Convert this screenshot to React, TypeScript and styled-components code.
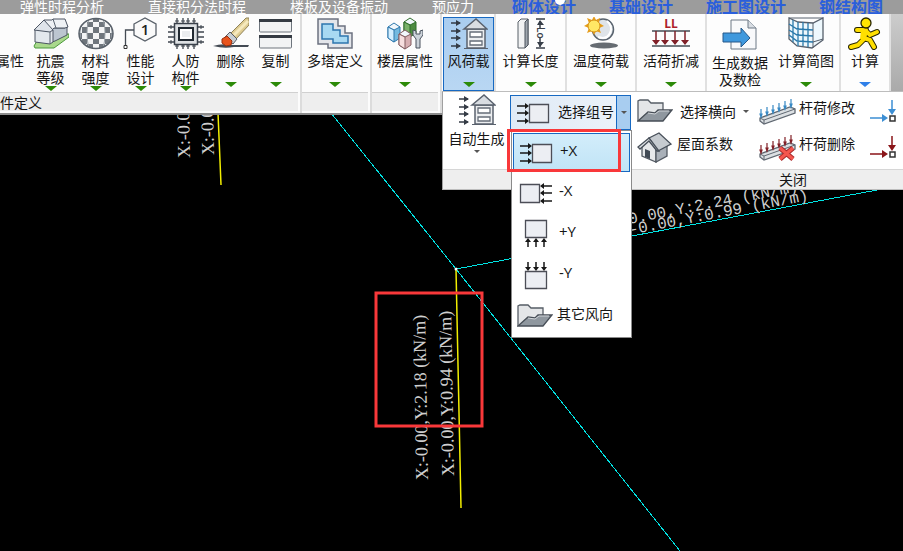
import React from "react";
import styled, { createGlobalStyle } from "styled-components";

const GlobalStyle = createGlobalStyle`
  * { box-sizing: border-box; }
  body { margin: 0; background: #000; overflow: hidden; }
  body, button { font-family: "Noto Sans CJK SC", "Open Sans", sans-serif; font-size: 14px; color: #161616; }
  button { border: 0; padding: 0; background: none; cursor: pointer; white-space: nowrap; }
  svg { display: block; flex: none; }
`;

const Page = styled.main`
  position: relative;
  min-height: 100vh;
  background: #000;
  overflow: hidden;
`;

const Canvas = styled.svg`
  position: absolute;
  inset: 0;
  width: 100%;
  height: 100%;
`;

const Header = styled.header`
  position: relative;
`;

const TabBar = styled.nav`
  display: flex;
  height: 14px;
  padding-left: 20px;
  overflow: hidden;
  background: #9c9c9c;
`;

const Tab = styled.button<{ $strong?: boolean }>`
  flex: none;
  height: 12px;
  line-height: 12px;
  font-size: ${(p) => (p.$strong ? 16 : 14)}px;
  font-weight: ${(p) => (p.$strong ? 700 : 400)};
  color: ${(p) => (p.$strong ? "#2a5fdc" : "#fff")};
  margin-right: ${(p) => (p.$strong ? 33 : 44)}px;
  &:nth-child(4) { margin-right: 38px; }
`;

const Handle = styled.span`
  position: absolute;
  top: -5px;
  left: 555px;
  width: 10px;
  height: 10px;
  border-radius: 50%;
  background: #fff;
`;

const Ribbon = styled.div`
  display: flex;
  align-items: flex-start;
`;

const LeftRibbon = styled.div`
  display: flex;
  flex: none;
  width: 443px;
  background: #fcfcfc;
  border-bottom: 2px solid #8c8c8c;
`;

const Group = styled.section<{ $width: number }>`
  width: ${(p) => p.$width}px;
  flex: none;
  border-right: 2px solid #dcdcdc;
  padding: 0 2px 2px 0;
`;

const GroupTools = styled.div`
  display: flex;
  justify-content: center;
  height: 78px;
  overflow: hidden;
`;

const GroupTitle = styled.div`
  height: 19px;
  line-height: 18px;
  background: #eee;
  border-top: 1px solid #d0d0d0;
`;

const Tool = styled.button<{ $width: number; $active?: boolean; $low?: boolean }>`
  display: flex;
  flex-direction: column;
  align-items: center;
  flex: none;
  width: ${(p) => p.$width}px;
  height: ${(p) => (p.$active ? 74 : 77)}px;
  margin-top: ${(p) => (p.$active ? 3 : 0)}px;
  padding-top: ${(p) => (p.$active ? 0 : p.$low ? 5 : 3)}px;
  line-height: 17px;
  ${(p) => p.$active && "background: linear-gradient(#a9cdf0, #b9d7f3); box-shadow: inset 0 0 0 1px #1769c2;"}
`;

const ToolText = styled.span<{ $double?: boolean }>`
  display: block;
  height: ${(p) => (p.$double ? 36 : 32)}px;
  padding-top: 2px;
  span { display: block; }
`;

const EdgeTool = styled(Tool)`
  align-items: flex-end;
  padding-top: 36px;
  padding-right: 4px;
`;

const RightRibbon = styled.div`
  position: relative;
  display: flex;
  flex: 1;
  min-width: 0;
  height: 77px;
  background: linear-gradient(#ccc, #aaa);
`;

const Cell = styled.div`
  display: flex;
  flex: none;
  height: 77px;
  background: #fdfdfd;
  border-right: 2px solid #e0e0e0;
`;

const Flyout = styled.section`
  position: absolute;
  top: 77px;
  left: -1px;
  right: 0;
  background: #fff;
  border: 1px solid #bdbdbd;
  border-left-color: #a0a0a0;
  border-right: 0;
`;

const FlyoutTools = styled.div`
  display: flex;
  height: 77px;
  padding-left: 5px;
  overflow: hidden;
`;

const FlyoutTitle = styled.div`
  height: 20px;
  padding-left: 336px;
  line-height: 19px;
  background: #eee;
  border-top: 1px solid #d6d6d6;
`;

const AutoTool = styled.button`
  display: flex;
  flex-direction: column;
  align-items: center;
  flex: none;
  width: 57px;
  height: 62px;
  padding-top: 1px;
  line-height: 24px;
`;

const PickColumn = styled.div`
  width: 121px;
  flex: none;
  margin: 3px 6px 0 5px;
`;

const SplitButton = styled.div`
  display: flex;
  height: 35px;
  border: 1px solid #1769c2;
  background: linear-gradient(90deg, #dfeaf6, #edf3fa);
`;

const SplitMain = styled.button`
  display: flex;
  align-items: center;
  gap: 8px;
  flex: 1;
  padding-left: 5px;
  span { padding-bottom: 4px; }
`;

const SplitArrow = styled.button`
  display: flex;
  align-items: center;
  justify-content: center;
  width: 14px;
  border-left: 1px solid #1769c2;
  background: #a8cdf0;
`;

const Menu = styled.div`
  position: absolute;
  z-index: 2;
  top: 38px;
  left: 68px;
  width: 121px;
  padding: 2px 1px 1px;
  background: #fff;
  border: 1px solid #8a8a8a;
`;

const MenuItem = styled.button<{ $active?: boolean }>`
  display: flex;
  align-items: center;
  gap: ${(p) => (p.$active ? 7 : 6)}px;
  width: 100%;
  height: 41px;
  padding: 0 0 0 5px;
  border: 1px solid transparent;
  font-size: 15px;
  font-family: "Open Sans", "Noto Sans CJK SC", sans-serif;
  span { padding-bottom: 6px; }
  &:last-child { padding-left: 3px; gap: 4px; font-size: 14px; }
  ${(p) => p.$active && "height: 39px; border-color: #1769c2; background: linear-gradient(#d3edfb, #c0e4f6);"}
`;

const Marker = styled.div`
  position: absolute;
  z-index: 3;
  top: 37px;
  left: 64px;
  width: 114px;
  height: 43px;
  border: 3px solid #f9383a;
`;

const SmallColumn = styled.div<{ $width: number }>`
  flex: none;
  width: ${(p) => p.$width}px;
`;

const SmallTool = styled.button<{ $gap: number; $tall?: boolean }>`
  display: flex;
  align-items: center;
  gap: ${(p) => p.$gap}px;
  height: ${(p) => (p.$tall ? 38 : 34)}px;
  line-height: 20px;
  & > span { padding-bottom: 8px; }
`;

const LevelTool = styled(SmallTool)`
  & > span { padding-bottom: 0; }
`;

const Art = ({ w = 36, h = 33, children }: { w?: number; h?: number; children: React.ReactNode }) => (
  <svg width={w} height={h} viewBox={`0 0 ${w} ${h}`} fill="none" aria-hidden="true">{children}</svg>
);

const Arrow = ({ color = "#2c8a08" }: { color?: string }) => (
  <Art w={12} h={5}><path d="M0 0h12L6 5z" fill={color} /></Art>
);
const Caret = () => <Art w={6} h={3}><path d="M0 0h6L3 3z" fill="#555" /></Art>;

const HouseBlock = () => (
  <Art>
    <path d="M1 29l3-5 13 1 15-8 4 0v3L21 31H2z" fill="#a9d88c" stroke="#4b9a3c" />
    <path d="M19 11h13l2-3v10l-12 6-3 1z" fill="#bcc6d0" stroke="#4c5563" />
    <path d="M2 13v12l15 2 3-2V13L11 3z" fill="#e3e8ed" stroke="#4c5563" />
    <path d="M11 3h8l1-1h12l3 8-3 1H21l-3 3z" fill="#eef1f4" stroke="#4c5563" />
    <path d="M1 13L11 3l9 10-3 2z" fill="#dfe4ea" stroke="#4c5563" />
    <path d="M20 2l3 9M17 15v12" stroke="#59636f" />
  </Art>
);

const checkerPath = (() => {
  const xs = [1, 4, 9, 15, 21, 27, 32, 35];
  const ys = [1, 5, 10, 16, 22, 27, 31];
  let d = "";
  for (let r = 0; r < 6; r++)
    for (let c = 0; c < 7; c++)
      if ((r + c) % 2) d += `M${xs[c]} ${ys[r]}H${xs[c + 1]}V${ys[r + 1]}H${xs[c]}z`;
  return d;
})();

const Ball = () => (
  <Art>
    <clipPath id="ball"><ellipse cx="18" cy="16.500" rx="17" ry="15" /></clipPath>
    <ellipse cx="18" cy="16.500" rx="17" ry="15" fill="#f3f4f5" />
    <g clipPath="url(#ball)">
      <path d={checkerPath} fill="#6e757c" />
      <path d="M5 1Q-1 16 5 32M11 1Q7 16 11 32M25 1Q29 16 25 32M31 1Q37 16 31 32" stroke="#9da4aa" />
    </g>
    <ellipse cx="18" cy="16.500" rx="17" ry="15" stroke="#59616a" strokeWidth="1.500" />
  </Art>
);

const HexNode = () => (
  <Art>
    <path d="M11 7l11-6 11 6v11l-11 6-11-6z" fill="#fafafa" stroke="#59616a" strokeWidth="1.300" />
    <text x="22" y="18" textAnchor="middle" fontFamily="Open Sans, sans-serif" fontSize="15" fontWeight="600" fill="#222">1</text>
    <path d="M11 13H2.500v16" stroke="#444b54" strokeWidth="1.300" />
    <path d="M1 28.500h3v3H1z" fill="#fff" stroke="#333" />
  </Art>
);

const Chip = () => (
  <Art>
    <path d="M9 1v5M15 1v5M20 1v5M26 1v5M9 28v4M15 28v4M20 28v4M26 28v4M0 10h6M0 15h6M0 20h6M0 25h6M30 10h6M30 15h6M30 20h6M30 25h6" stroke="#3f464f" strokeWidth="1.300" />
    <path d="M7 4h4M13 4h4M18 4h4M24 4h4M7 29h4M13 29h4M18 29h4M24 29h4M3 8v4M3 23v4M33 8v4M33 23v4" stroke="#3f464f" />
    <path d="M6.500 6.500h23v21h-23z" fill="#dde0e3" stroke="#39404a" strokeWidth="1.500" />
    <path d="M11 11h14v12H11z" fill="#fff" stroke="#222a32" strokeWidth="2" />
    <path d="M14 14h8v6h-8z" fill="#ebedef" />
  </Art>
);

const Brush = () => (
  <Art>
    <path d="M0 29q9-3 18-1h18l-1 2H21q-10 2-21-1z" fill="#444b54" />
    <path d="M17 17L33 1h3v7L23 22z" fill="#dfcc92" stroke="#8f8359" />
    <path d="M21 18L35 4" stroke="#f5e9bd" strokeWidth="3" />
    <path d="M12 20l5-5 7 7-4 5z" fill="#c7cdd2" stroke="#565d66" />
    <path d="M9 22l5-3 5 5-1 4-5 1-4-3z" fill="#e8541d" stroke="#9a2f0d" />
  </Art>
);

const Copies = () => (
  <Art>
    {[2, 18].map((y) => (
      <g key={y}>
        <rect x="1.500" y={y + 1} width="32" height="12" rx="1" fill="#f2f3f4" stroke="#6e757d" />
        <path d={`M1 ${y}h33v3H1z`} fill="#353b43" />
      </g>
    ))}
  </Art>
);

const Tower = () => (
  <Art>
    <path d="M1 2h20v7h7v7h7v15H11v-4H1z" fill="#e3e5ea" stroke="#6c7180" strokeWidth="1.500" />
    <path d="M5 7h11v6h7v6h8v7H16v-4H5z" fill="#a8d9f2" stroke="#2e76ae" strokeWidth="1.500" />
  </Art>
);

const Cube = ({ x, y, a, b, s }: { x: number; y: number; a: string; b: string; s: string }) => (
  <g transform={`translate(${x} ${y})`} stroke={s}>
    <path d="M0 4v11l6 4 6-4V4z" fill={b} />
    <path d="M0 4l6-4 6 4-6 3z" fill="#f1f7fb" />
    <path d="M0 4l6 3v12l-6-4z" fill={a} />
  </g>
);

const Floors = () => (
  <Art>
    <Cube x={17} y={1} a="#79b168" b="#4d8c40" s="#2f6d2a" />
    <Cube x={1} y={6} a="#d4efff" b="#74badf" s="#2e78ad" />
    <Cube x={12} y={13} a="#f6dede" b="#d7aeb1" s="#825c60" />
    <path d="M26 13v5l3 4v9h4v-9l3-4v-5l-3 1v3h-4v-3z" fill="#ccd3da" stroke="#48515d" />
  </Art>
);

const WindHouse = () => (
  <Art w={38} h={33}>
    <path d="M1 6h9M1 14h9M1 21h9M1 29h9" stroke="#343b45" strokeWidth="1.500" />
    <path d="M6 3l5 3-5 3zM6 11l5 3-5 3zM6 18l5 3-5 3zM6 26l5 3-5 3z" fill="#343b45" />
    <path d="M17 12h18v19H17z" fill="#eceef0" stroke="#59616d" strokeWidth="1.500" />
    <path d="M14 12L26 2l11 10z" fill="#d9dde2" stroke="#59616d" strokeWidth="1.500" />
    <path d="M20 15h12v5H20zM20 24h12v4H20z" fill="#fff" stroke="#656d78" strokeWidth="1.300" />
    <path d="M14 31.500h24" stroke="#59616d" />
  </Art>
);

const LengthArt = () => (
  <Art>
    <path d="M5 5l3-3h7v26l-3 3H5z" fill="#f1f2f3" stroke="#596069" />
    <path d="M12 5v26l3-3V2z" fill="#9fa6ae" stroke="#4b535d" />
    <path d="M23 2h9M23 31h9M27 4v7M27 21v9" stroke="#373e48" strokeWidth="1.500" />
    <path d="M24 8l3-5 4 5zM24 25l3 5 4-5z" fill="#373e48" />
    <text transform="translate(24 10) rotate(90)" fontFamily="Open Sans, sans-serif" fontSize="10" fontWeight="600" fill="#373e48">Lo</text>
  </Art>
);

const SunMoon = () => (
  <Art w={38}>
    <ellipse cx="22" cy="28.500" rx="14" ry="3" fill="#666c72" />
    <circle cx="21" cy="12.500" r="10.500" fill="#dfe4e9" stroke="#59636e" strokeWidth="1.500" />
    <path d="M25 4q6 5 3 12t-12 4" stroke="#fff" strokeWidth="2" />
    <path d="M12-1l2 4 4-2-1 5 5 3-5 2 2 5-5-2-2 4-2-4-5 2 2-5-5-2 5-3-2-5 5 2z" fill="#e79d1b" />
    <circle cx="12" cy="9" r="6" fill="#ffe765" stroke="#d69319" />
  </Art>
);

const LiveLoad = () => (
  <Art w={40}>
    <text x="20" y="11" textAnchor="middle" fontFamily="Open Sans, sans-serif" fontSize="12" fontWeight="700" fill="#ae1e29">LL</text>
    <path d="M1 14h38M1 29h38" stroke="#464d56" strokeWidth="1.500" />
    <path d="M5 14v12M14 14v12M24 14v12M34 14v12" stroke="#802028" strokeWidth="1.500" />
    <path d="M1 23h8l-4 5zM10 23h8l-4 5zM20 23h8l-4 5zM30 23h8l-4 5z" fill="#802028" />
  </Art>
);

const Export = () => (
  <Art>
    <path d="M9 1h17l8 8v21H9z" fill="#f8f9fb" stroke="#6c7885" />
    <path d="M26 1v8h8" fill="#d8dde3" stroke="#6c7885" />
    <path d="M1 14h18V9l9 10-9 9v-5H1z" fill="#3f98dd" stroke="#26588a" />
  </Art>
);

const Mesh = () => (
  <Art w={38}>
    <path d="M2 1l9 4 15 1 10-5v22L25 31l-15-2-8-7z" fill="#eef8fd" stroke="#57606c" strokeWidth="1.300" />
    <path d="M2 1h34M26 6v25M26 25l10-3" stroke="#57606c" />
    <path d="M2 7l8 5 16 1M2 13l8 5 16 1M2 18l8 6 16 1M6 3v22M11 5v24M16 5v24M21 6v24" stroke="#2878aa" strokeWidth="1.300" />
  </Art>
);

const Runner = () => (
  <Art>
    <g strokeLinejoin="round">
      <path d="M10 13l9 0-2 9-6 6-7 2M17 21l6 2 4 7M18 13l5 5 7-3" stroke="#292600" strokeWidth="6" strokeLinecap="round" />
      <path d="M10 13l9 0-2 9-6 6-7 2M17 21l6 2 4 7M18 13l5 5 7-3" stroke="#ffdf00" strokeWidth="4" strokeLinecap="round" />
    </g>
    <path d="M14 13h7l-3 9h-5z" fill="#ffdf00" />
    <circle cx="19" cy="6" r="5" fill="#ffe400" stroke="#292600" strokeWidth="1.300" />
  </Art>
);

const LoadBox = ({ dir }: { dir: "right" | "left" | "up" | "down" }) => {
  const side = dir === "right" || dir === "left";
  return (
    <Art w={34} h={30}>
      {side ? (
        <g transform={dir === "left" ? "translate(34 0) scale(-1 1)" : undefined}>
          <path d="M1 8h10M1 15h10M1 23h10" stroke="#171717" strokeWidth="1.500" />
          <path d="M9 5l4 3-4 3zM9 12l4 3-4 3zM9 20l4 3-4 3z" fill="#171717" />
          <path d="M13.500 6.500h19v18h-19z" fill="#eceef3" stroke="#4c4e57" strokeWidth="1.300" />
        </g>
      ) : (
        <g transform={dir === "down" ? "translate(0 30) scale(1 -1)" : undefined}>
          <path d="M6.500 1.500h21v17h-21z" fill="#eceef3" stroke="#4c4e57" strokeWidth="1.300" />
          <path d="M9 21v7M17 21v7M25 21v7" stroke="#171717" strokeWidth="1.500" />
          <path d="M6 23l3-4 3 4zM14 23l3-4 3 4zM22 23l3-4 3 4z" fill="#171717" />
        </g>
      )}
    </Art>
  );
};

const Folder = () => (
  <Art w={36} h={24}>
    <path d="M1 22V2l2-1h8l3 3h12v9" fill="#e4e6e8" stroke="#565d66" strokeWidth="1.300" />
    <path d="M1 22l10-9 7 1 3-3h14l-9 11z" fill="#8f979f" stroke="#474e57" strokeWidth="1.300" />
    <path d="M11 14l7 1 4-3h10" stroke="#d0d4d8" />
  </Art>
);

const Home = () => (
  <Art w={36} h={31}>
    <path d="M5 13v11l14 6V17L12 8z" fill="#e6e8ea" stroke="#535a63" strokeWidth="1.300" />
    <path d="M19 18v12l11-6V12z" fill="#a9b0b8" stroke="#535a63" strokeWidth="1.300" />
    <path d="M12 6l10-5 12 11-13 7z" fill="#c6cbd0" stroke="#474f59" strokeWidth="1.300" />
    <path d="M12 6L1 15l2 2 9-8 8 10 2 0z" fill="#dfe2e5" stroke="#474f59" strokeWidth="1.300" />
    <path d="M8 17l5 2v8l-5-2z" fill="#414a55" />
  </Art>
);

const BeamLoad = ({ red }: { red?: boolean }) => {
  const c = red ? "#822027" : "#3889c4";
  return (
    <Art w={38} h={27}>
      <path d="M2 20L32 9l5 2v4L6 26l-4-3z" fill="#dce0e3" stroke="#606872" strokeWidth="1.300" />
      <path d="M2 20l4 2 31-11M6 22v4" stroke="#606872" />
      {[3, 9, 15, 21, 27, 33].map((x, i) => (
        <path key={x} d={`M${x} ${11 - i * 2}v7M${x - 1} ${16 - i * 2}l1 3 1-3z`} stroke={c} strokeWidth="1.200" fill={c} />
      ))}
      {red && (
        <>
          <path d="M22 14L35 25M35 14L22 25" stroke="#a82a2c" strokeWidth="5" />
          <path d="M22 14L35 25M35 14L22 25" stroke="#f4564e" strokeWidth="3" />
        </>
      )}
    </Art>
  );
};

const NodeLoad = ({ color }: { color: string }) => (
  <Art w={28} h={23}>
    <path d="M0 18h16M22 0v12" stroke={color} strokeWidth="1.500" />
    <path d="M12 14l6 4-6 4zM18 9h8l-4 6z" fill={color} />
    <path d="M20 16h5v5h-5z" fill="#fff" stroke="#333" strokeWidth="1.500" />
  </Art>
);

type ToolProps = {
  icon: React.ReactNode; lines: string[]; width: number; active?: boolean; low?: boolean; arrow?: string | null;
};
const RibbonTool = ({ icon, lines, width, active, low, arrow }: ToolProps) => (
  <Tool $width={width} $active={active} $low={low}>
    {icon}
    <ToolText $double={lines.length > 1}>{lines.map((l) => <span key={l}>{l}</span>)}</ToolText>
    {arrow !== null && <Arrow color={arrow} />}
  </Tool>
);

const tabs: [string, boolean][] = [
  ["弹性时程分析", false], ["直接积分法时程", false], ["楼板及设备振动", false], ["预应力", false],
  ["砌体设计", true], ["基础设计", true], ["施工图设计", true], ["钢结构图", true],
];

const winds: [React.ReactNode, string][] = [
  [<LoadBox dir="right" />, "+X"], [<LoadBox dir="left" />, "-X"], [<LoadBox dir="up" />, "+Y"],
  [<LoadBox dir="down" />, "-Y"], [<Folder />, "其它风向"],
];

const Drawing = () => (
  <Canvas role="img" aria-label="荷载简图">
    <g fill="none" strokeWidth="1">
      <path d="M331 113L456 269L680 551M456 269L877 190" stroke="#00e4e4" shapeRendering="crispEdges" />
      <path d="M456 269L461 508M218 113L221 185" stroke="#f2ee00" strokeWidth="1.500" />
    </g>
    <circle cx="456" cy="269" r="1.500" fill="#fff" />
    <g fill="#cfcfcf" fontFamily="Liberation Serif, serif" fontSize="18">
      <text transform="translate(428 480) rotate(-91)">X:-0.00,Y:2.18 (kN/m)</text>
      <text transform="translate(454 476) rotate(-91)">X:-0.00,Y:0.94 (kN/m)</text>
      <text transform="translate(190 158) rotate(-91)">X:-0.00</text>
      <text transform="translate(214 155) rotate(-91)">X:-0.00</text>
    </g>
    <g fill="#cfcfcf" fontFamily="Liberation Mono, monospace" fontSize="16" textAnchor="end">
      <text transform="translate(799 191) rotate(-11)">X:-0.00,Y:2.24 (kN/m)</text>
      <text transform="translate(809 200) rotate(-11)">X:-0.00,Y:0.99 (kN/m)</text>
    </g>
    <rect x="376" y="293" width="106" height="133" fill="none" stroke="#f9383a" strokeWidth="3" />
  </Canvas>
);

export default function App() {
  return (
    <Page>
      <GlobalStyle />
      <Drawing />
      <Header>
        <TabBar>
          {tabs.map(([name, strong]) => <Tab key={name} $strong={strong}>{name}</Tab>)}
          <Handle />
        </TabBar>
        <Ribbon>
          <LeftRibbon>
            <Group $width={302}>
              <GroupTools>
                <EdgeTool $width={28}><ToolText>属性</ToolText></EdgeTool>
                <RibbonTool icon={<HouseBlock />} lines={["抗震", "等级"]} width={45} />
                <RibbonTool icon={<Ball />} lines={["材料", "强度"]} width={45} />
                <RibbonTool icon={<HexNode />} lines={["性能", "设计"]} width={45} />
                <RibbonTool icon={<Chip />} lines={["人防", "构件"]} width={45} />
                <RibbonTool icon={<Brush />} lines={["删除"]} width={45} />
                <RibbonTool icon={<Copies />} lines={["复制"]} width={45} />
              </GroupTools>
              <GroupTitle>件定义</GroupTitle>
            </Group>
            <Group $width={70}>
              <GroupTools><RibbonTool icon={<Tower />} lines={["多塔定义"]} width={66} /></GroupTools>
              <GroupTitle />
            </Group>
            <Group $width={70}>
              <GroupTools><RibbonTool icon={<Floors />} lines={["楼层属性"]} width={66} /></GroupTools>
              <GroupTitle />
            </Group>
          </LeftRibbon>
          <RightRibbon>
            <Cell><RibbonTool icon={<WindHouse />} lines={["风荷载"]} width={51} active /></Cell>
            <Cell><RibbonTool icon={<LengthArt />} lines={["计算长度"]} width={69} /></Cell>
            <Cell><RibbonTool icon={<SunMoon />} lines={["温度荷载"]} width={68} /></Cell>
            <Cell><RibbonTool icon={<LiveLoad />} lines={["活荷折减"]} width={68} /></Cell>
            <Cell>
              <RibbonTool icon={<Export />} lines={["生成数据", "及数检"]} width={66} low arrow={null} />
              <RibbonTool icon={<Mesh />} lines={["计算简图"]} width={66} />
            </Cell>
            <Cell><RibbonTool icon={<Runner />} lines={["计算"]} width={48} arrow="#2f7fe8" /></Cell>
            <Flyout>
              <FlyoutTools>
                <AutoTool><WindHouse /><span>自动生成</span><Caret /></AutoTool>
                <PickColumn>
                  <SplitButton>
                    <SplitMain><LoadBox dir="right" /><span>选择组号</span></SplitMain>
                    <SplitArrow aria-label="展开"><Caret /></SplitArrow>
                  </SplitButton>
                </PickColumn>
                <SmallColumn $width={121}>
                  <LevelTool $gap={7} $tall><Folder /><span>选择横向</span><Caret /></LevelTool>
                  <SmallTool $gap={4}><Home /><span>屋面系数</span></SmallTool>
                </SmallColumn>
                <SmallColumn $width={112}>
                  <SmallTool $gap={3} $tall><BeamLoad /><span>杆荷修改</span></SmallTool>
                  <SmallTool $gap={3}><BeamLoad red /><span>杆荷删除</span></SmallTool>
                </SmallColumn>
                <SmallColumn $width={30}>
                  <SmallTool $gap={0} $tall aria-label="节点荷载修改"><NodeLoad color="#3d8fd4" /></SmallTool>
                  <SmallTool $gap={0} aria-label="节点荷载删除"><NodeLoad color="#8a1519" /></SmallTool>
                </SmallColumn>
              </FlyoutTools>
              <FlyoutTitle>关闭</FlyoutTitle>
              <Menu role="menu">
                {winds.map(([icon, name], i) => (
                  <MenuItem key={name} role="menuitem" $active={i === 0}>{icon}<span>{name}</span></MenuItem>
                ))}
              </Menu>
              <Marker />
            </Flyout>
          </RightRibbon>
        </Ribbon>
      </Header>
    </Page>
  );
}
